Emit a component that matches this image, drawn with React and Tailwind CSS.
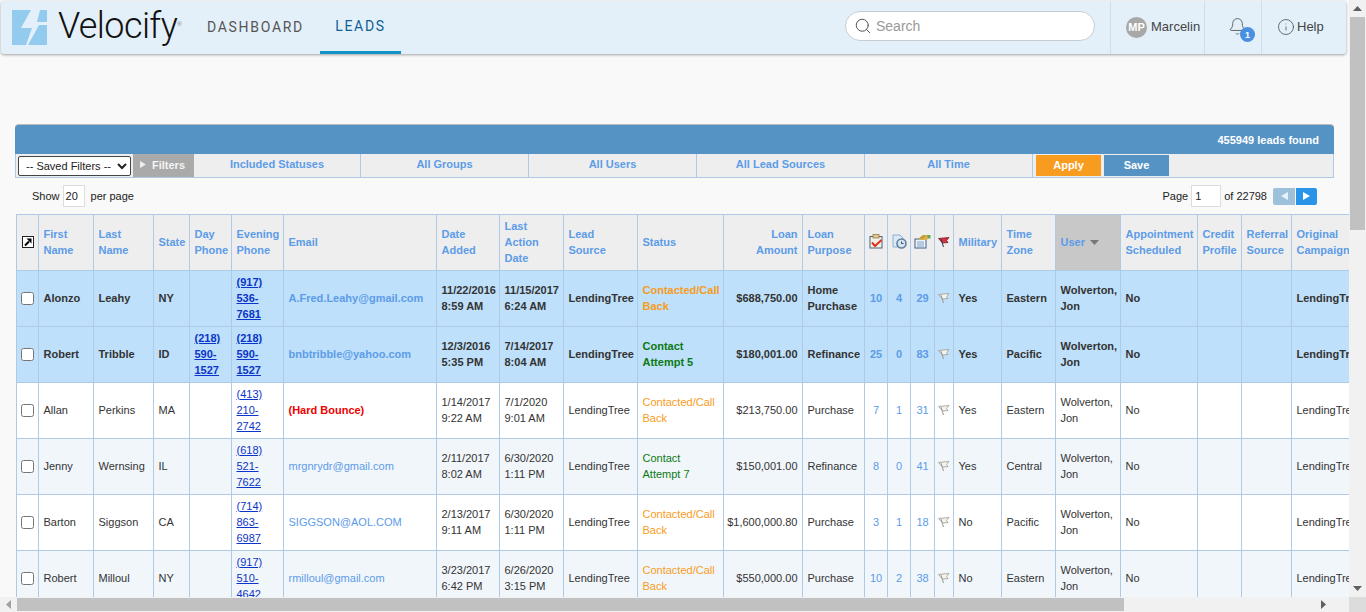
import { Search, Bell, Info } from 'lucide-react'

const colWidths = [22, 55, 60, 36, 42, 52, 153, 63, 64, 74, 86, 79, 62, 23, 23, 24, 19, 48, 54, 65, 77, 44, 50, 120]

const filters = [
  { label: 'Included Statuses', width: 'w-[167px]' },
  { label: 'All Groups', width: 'w-[168px]' },
  { label: 'All Users', width: 'w-[168px]' },
  { label: 'All Lead Sources', width: 'w-[168px]' },
  { label: 'All Time', width: 'w-[168px]' },
]

const rows = [
  { first: 'Alonzo', last: 'Leahy', state: 'NY', day: '', evening: '(917) 536-7681', email: 'A.Fred.Leahy@gmail.com', added: ['11/22/2016', '8:59 AM'], action: ['11/15/2017', '6:24 AM'], status: 'Contacted/Call Back', tone: 'orange', amount: '$688,750.00', purpose: 'Home Purchase', a: 10, b: 4, c: 29, military: 'Yes', zone: 'Eastern', hot: true },
  { first: 'Robert', last: 'Tribble', state: 'ID', day: '(218) 590-1527', evening: '(218) 590-1527', email: 'bnbtribble@yahoo.com', added: ['12/3/2016', '5:35 PM'], action: ['7/14/2017', '8:04 AM'], status: 'Contact Attempt 5', tone: 'green', amount: '$180,001.00', purpose: 'Refinance', a: 25, b: 0, c: 83, military: 'Yes', zone: 'Pacific', hot: true },
  { first: 'Allan', last: 'Perkins', state: 'MA', day: '', evening: '(413) 210-2742', email: '(Hard Bounce)', bounce: true, added: ['1/14/2017', '9:22 AM'], action: ['7/1/2020', '9:01 AM'], status: 'Contacted/Call Back', tone: 'orange', amount: '$213,750.00', purpose: 'Purchase', a: 7, b: 1, c: 31, military: 'Yes', zone: 'Eastern' },
  { first: 'Jenny', last: 'Wernsing', state: 'IL', day: '', evening: '(618) 521-7622', email: 'mrgnrydr@gmail.com', added: ['2/11/2017', '8:02 AM'], action: ['6/30/2020', '1:11 PM'], status: 'Contact Attempt 7', tone: 'green', amount: '$150,001.00', purpose: 'Refinance', a: 8, b: 0, c: 41, military: 'Yes', zone: 'Central', alt: true },
  { first: 'Barton', last: 'Siggson', state: 'CA', day: '', evening: '(714) 863-6987', email: 'SIGGSON@AOL.COM', added: ['2/13/2017', '9:11 AM'], action: ['6/30/2020', '1:11 PM'], status: 'Contacted/Call Back', tone: 'orange', amount: '$1,600,000.80', purpose: 'Purchase', a: 3, b: 1, c: 18, military: 'No', zone: 'Pacific' },
  { first: 'Robert', last: 'Milloul', state: 'NY', day: '', evening: '(917) 510-4642', email: 'rmilloul@gmail.com', added: ['3/23/2017', '6:42 PM'], action: ['6/26/2020', '3:15 PM'], status: 'Contacted/Call Back', tone: 'orange', amount: '$550,000.00', purpose: 'Purchase', a: 10, b: 2, c: 38, military: 'No', zone: 'Eastern', alt: true },
]

const th = 'border border-[#aecae6] px-[4.5px] pb-[2px] font-bold text-left text-[#5c9ce8] align-middle'
const td = 'border border-[#aecae6] px-[4.5px] pb-[2px] align-middle overflow-hidden'

function LogoMark() {
  return (
    <svg width="35" height="35" viewBox="0 0 35 35" className="shrink-0">
      <rect width="35" height="35" fill="#93cbee" />
      <polygon points="19,0 28,0 25,12 35,12 35,15 27,15 16,35 14,35 20,18 9,18" fill="#e3f0f9" />
    </svg>
  )
}

function TaskIcon() {
  return (
    <svg width="15" height="15" viewBox="0 0 15 15" className="mx-auto block">
      <rect x="1" y="2.5" width="12" height="11.5" fill="#f2f1e6" stroke="#49627f" />
      <rect x="4" y="0.5" width="6" height="3.5" fill="#e2c98a" stroke="#8a7440" strokeWidth="0.7" />
      <path d="M3 8.5l3 3.5L12.5 6" fill="none" stroke="#e0301e" strokeWidth="2" />
    </svg>
  )
}

function ClockIcon() {
  return (
    <svg width="15" height="15" viewBox="0 0 15 15" className="mx-auto block">
      <path d="M1 1h7l3 3v9H1z" fill="#dbe8f6" stroke="#8fb0d6" />
      <circle cx="9.5" cy="9.5" r="4.5" fill="#d5e4f2" stroke="#5f7f9e" strokeWidth="1.6" />
      <path d="M9.5 7.5v2h2" fill="none" stroke="#33506f" />
    </svg>
  )
}

function NoteIcon() {
  return (
    <svg width="17" height="15" viewBox="0 0 17 15" className="mx-auto block">
      <rect x="1" y="5" width="11" height="9" fill="#f0f5fb" stroke="#3f5f86" />
      <path d="M3 8h7M3 10h7M3 12h7" stroke="#7f9dc0" />
      <path d="M4 5l5-4h5l2 1-3 4H7z" fill="#dcb24c" />
      <path d="M5.5 4.5l4-3M7.5 5l4-3.5" stroke="#8a6d22" strokeWidth="0.6" />
      <path d="M13 1h3.5v3.5H14z" fill="#6aa84f" />
    </svg>
  )
}

function FlagIcon({ red }) {
  const fill = red ? '#d8333f' : '#f4f4ee'
  const line = red ? '#7a1a20' : '#9a9a90'
  return (
    <svg width="12" height="12" viewBox="0 0 12 12" className="mx-auto block">
      <path d="M0.5 2.5L11 1.5 8.5 4.5l1.5 2L4.5 7z" fill={fill} stroke={line} strokeWidth="0.8" />
      <path d="M3 3l2.5 8" stroke={red ? '#243a66' : '#9a9a90'} strokeWidth="1" />
    </svg>
  )
}

function ShortcutIcon() {
  return (
    <svg width="12" height="12" viewBox="0 0 12 12" className="mx-auto block">
      <rect x="0.5" y="0.5" width="11" height="11" fill="#fff" stroke="#222" />
      <path d="M3 9.5L7 5.5" stroke="#000" strokeWidth="2" />
      <path d="M4.5 2.5H9.5V7.5z" fill="#000" />
    </svg>
  )
}

function TopBar() {
  return (
    <header className="ml-px mt-px h-[53px] w-[1345px] shrink-0 rounded-[3px] bg-[#e3f0f9] shadow-[0_1px_3px_rgba(0,0,0,0.35)] flex items-stretch">
      <div className="flex items-center pl-[11px] w-[194px] shrink-0">
        <LogoMark />
        <span className="ml-[11px] font-['Roboto',sans-serif] font-light text-[36px] leading-none tracking-[-0.6px] text-[#111] pb-[3px]">Velocify</span>
        <span className="text-[6px] text-[#777] self-start mt-[15px]">®</span>
      </div>
      <nav className="flex font-['Roboto',sans-serif] text-[14px] tracking-[1.7px]">
        <a className="w-[125px] flex items-center justify-center text-[#555] pb-[2px] pr-[4px]">DASHBOARD</a>
        <a className="w-[81px] flex items-center justify-center text-[#0f5e94] border-b-[3px] border-[#1293c6]">LEADS</a>
      </nav>
      <div className="ml-[444px] w-[250px] h-[30px] mt-[10px] rounded-full bg-white border border-[#c8cdd2] flex items-center pl-[8px] gap-[4px] shrink-0">
        <Search size={18} strokeWidth={1.2} className="text-[#444]" />
        <span className="text-[14px] text-[#999]">Search</span>
      </div>
      <div className="ml-[15px] w-[94px] border-l border-[#d3dde5] flex items-center pl-[15px] gap-[4px] text-[13px] text-[#444] shrink-0 pb-[1px]">
        <span className="w-[21px] h-[21px] rounded-full bg-[#a8a8a8] text-white text-[11px] font-bold flex items-center justify-center">MP</span>
        Marcelin
      </div>
      <div className="w-[57px] border-l border-[#d3dde5] relative shrink-0">
        <Bell size={19} strokeWidth={1} className="absolute left-[23px] top-[16px] text-[#444]" />
        <span className="absolute left-[35px] top-[26px] w-[15px] h-[15px] rounded-full bg-[#4a90e2] text-white text-[9px] font-bold flex items-center justify-center">1</span>
      </div>
      <div className="border-l border-[#d3dde5] flex items-center pl-[15px] gap-[2px] text-[13px] text-[#444] shrink-0 pb-[1px]">
        <Info size={18} strokeWidth={1} />
        Help
      </div>
    </header>
  )
}

function FilterBar() {
  return (
    <section className="ml-[15px] mt-[70px] w-[1319px] shrink-0">
      <div className="h-[30px] rounded-t-[4px] border-t border-[#bbb] bg-[#5593c5] flex items-center justify-end pr-[15px] text-white font-bold">
        455949 leads found
      </div>
      <div className="h-[24px] bg-[#eeeeee] border-b border-x border-[#aecae6] flex items-stretch">
        <select className="ml-[2px] mt-[2px] h-[20px] w-[113px] pl-[3px] bg-white border border-[#444] rounded-[2px] text-[11px] text-[#222] shrink-0">
          <option>-- Saved Filters --</option>
        </select>
        <div className="ml-[2px] w-[61px] h-[23px] bg-[#aaaaaa] text-[#f4f4f4] font-bold flex items-center pl-[7px] gap-[6px] pb-[2px] shrink-0">
          <svg width="6" height="7" viewBox="0 0 6 7"><path d="M0 0l6 3.5L0 7z" fill="#eee" /></svg>
          Filters
        </div>
        {filters.map(f => (
          <div key={f.label} className={`${f.width} border-r border-[#aecae6] text-[#5c9ce8] font-bold flex items-center justify-center pb-[3px] shrink-0`}>
            {f.label}
          </div>
        ))}
        <button className="ml-[3px] mt-[1px] w-[65px] h-[21px] pb-[1px] bg-[#f89c1f] text-white font-bold shrink-0">Apply</button>
        <button className="ml-[3px] mt-[1px] w-[65px] h-[21px] pb-[1px] bg-[#5593c5] text-white font-bold shrink-0">Save</button>
      </div>
    </section>
  )
}

function Pager() {
  return (
    <div className="h-[36px] ml-[32px] w-[1285px] shrink-0 flex items-center text-[#222]">
      <span>Show</span>
      <span className="ml-[3px] w-[22px] h-[22px] bg-white border border-[#ddd] pl-[2px] flex items-center">20</span>
      <span className="ml-[6px]">per page</span>
      <span className="ml-auto">Page</span>
      <span className="ml-[3px] w-[30px] h-[22px] bg-white border border-[#ddd] pl-[3px] flex items-center">1</span>
      <span className="ml-[3px]">of 22798</span>
      <span className="ml-[6px] w-[22px] h-[17px] rounded-l-[2px] bg-[#9dc1da] flex items-center justify-center">
        <svg width="7" height="8" viewBox="0 0 7 8"><path d="M7 0v8L0 4z" fill="#e8f1f7" /></svg>
      </span>
      <span className="ml-px w-[21px] h-[17px] rounded-r-[2px] bg-[#2a95e8] flex items-center justify-center">
        <svg width="7" height="8" viewBox="0 0 7 8"><path d="M0 0v8l7-4z" fill="#fff" /></svg>
      </span>
    </div>
  )
}

function Row({ row }) {
  const bg = row.hot ? 'bg-[#bee0fa] font-bold' : row.alt ? 'bg-[#f1f6fb]' : 'bg-white'
  const tone = row.tone === 'orange' ? 'text-[#f79c1c]' : 'text-[#0a7a12]'
  const count = `${td} text-center text-[#5c9ce8] !px-0`
  return (
    <tr className={`h-[56px] ${bg}`}>
      <td className={`${td} !px-0 text-center`}>
        <input type="checkbox" className="align-middle" />
      </td>
      <td className={td}>{row.first}</td>
      <td className={td}>{row.last}</td>
      <td className={td}>{row.state}</td>
      <td className={`${td} !pr-0`}><a className="underline text-[#0b35c8]">{row.day}</a></td>
      <td className={`${td} !pr-[4px]`}><a className="underline text-[#0b35c8]">{row.evening}</a></td>
      <td className={`${td} ${row.bounce ? 'text-[#f00000] font-bold' : 'text-[#5c9ce8]'}`}>{row.email}</td>
      <td className={td}>{row.added[0]}<br />{row.added[1]}</td>
      <td className={td}>{row.action[0]}<br />{row.action[1]}</td>
      <td className={td}>LendingTree</td>
      <td className={`${td} ${tone}`}>{row.status}</td>
      <td className={`${td} text-right !pl-0`}>{row.amount}</td>
      <td className={td}>{row.purpose}</td>
      <td className={count}>{row.a}</td>
      <td className={count}>{row.b}</td>
      <td className={count}>{row.c}</td>
      <td className={`${td} !px-0`}><FlagIcon /></td>
      <td className={td}>{row.military}</td>
      <td className={td}>{row.zone}</td>
      <td className={td}>Wolverton, Jon</td>
      <td className={td}>No</td>
      <td className={td}></td>
      <td className={td}></td>
      <td className={`${td} whitespace-nowrap`}>LendingTree</td>
    </tr>
  )
}

function LeadsTable() {
  return (
    <table className="ml-[16px] table-fixed border-collapse w-[1395px] shrink-0">
      <colgroup>
        {colWidths.map((w, i) => <col key={i} style={{ width: w }} />)}
      </colgroup>
      <thead>
        <tr className="h-[56px] bg-[#eeeeee]">
          <th className={`${th} !px-0`}><ShortcutIcon /></th>
          <th className={th}>First Name</th>
          <th className={th}>Last Name</th>
          <th className={th}>State</th>
          <th className={`${th} !pr-0`}>Day Phone</th>
          <th className={`${th} !pr-0`}>Evening Phone</th>
          <th className={th}>Email</th>
          <th className={th}>Date Added</th>
          <th className={th}>Last Action Date</th>
          <th className={th}>Lead Source</th>
          <th className={th}>Status</th>
          <th className={`${th} text-right`}>Loan Amount</th>
          <th className={th}>Loan Purpose</th>
          <th className={`${th} !px-0`}><TaskIcon /></th>
          <th className={`${th} !px-0`}><ClockIcon /></th>
          <th className={`${th} !px-0`}><NoteIcon /></th>
          <th className={`${th} !px-0`}><FlagIcon red /></th>
          <th className={th}>Military</th>
          <th className={th}>Time Zone</th>
          <th className={`${th} !bg-[#c8c8c8]`}>
            User
            <svg width="9" height="5" viewBox="0 0 9 5" className="inline-block ml-[5px] align-middle"><path d="M0 0h9L4.5 5z" fill="#777" /></svg>
          </th>
          <th className={`${th} !pr-0`}>Appointment Scheduled</th>
          <th className={th}>Credit Profile</th>
          <th className={th}>Referral Source</th>
          <th className={`${th} whitespace-nowrap`}>Original<br />Campaign</th>
        </tr>
      </thead>
      <tbody>
        {rows.map((row, i) => <Row key={i} row={row} />)}
      </tbody>
    </table>
  )
}

export default function App() {
  return (
    <div className="w-[1366px] h-[612px] overflow-hidden flex flex-col bg-[#f9f9f9] font-['Liberation_Sans',sans-serif] text-[11px] leading-[16px] text-[#333]">
      <div className="flex h-[597px] shrink-0">
        <main className="w-[1349px] overflow-hidden flex flex-col">
          <TopBar />
          <FilterBar />
          <Pager />
          <LeadsTable />
        </main>
        <div className="w-[17px] bg-[#f1f1f1] flex flex-col items-center">
          <svg width="9" height="5" viewBox="0 0 9 5" className="mt-[6px]"><path d="M4.5 0L9 5H0z" fill="#606060" /></svg>
          <div className="mt-[6px] w-[15px] h-[213px] bg-[#c1c1c1]" />
          <svg width="9" height="5" viewBox="0 0 9 5" className="mt-auto mb-[6px]"><path d="M0 0h9L4.5 5z" fill="#606060" /></svg>
        </div>
      </div>
      <div className="flex h-[15px] shrink-0 bg-[#f1f1f1] items-center">
        <svg width="5" height="9" viewBox="0 0 5 9" className="ml-[6px]"><path d="M5 0v9L0 4.5z" fill="#a0a0a0" /></svg>
        <div className="ml-[6px] w-[1107px] h-[13px] bg-[#c1c1c1]" />
        <svg width="5" height="9" viewBox="0 0 5 9" className="ml-auto mr-[23px]"><path d="M0 0v9l5-4.5z" fill="#606060" /></svg>
        <div className="w-[17px] h-full bg-[#dcdcdc]" />
      </div>
    </div>
  )
}
